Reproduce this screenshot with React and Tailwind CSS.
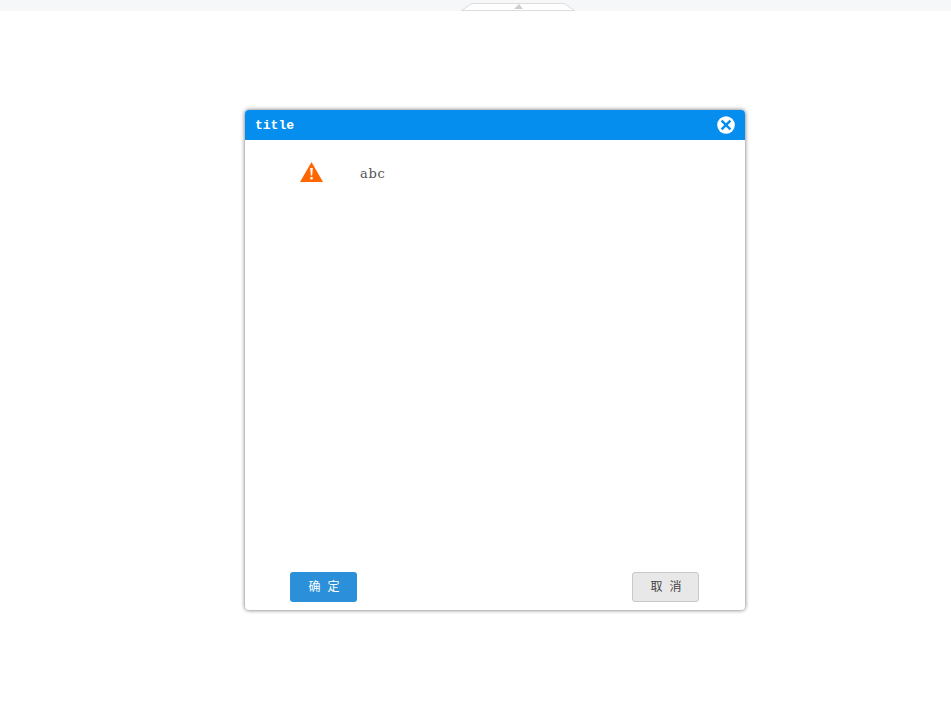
import React from 'react';

const font = { fontFamily: '"Liberation Mono", "Noto Sans CJK SC", monospace' };

export default function App() {
  return (
    <div className="min-h-screen bg-white flex flex-col items-center" style={font}>
      <div className="w-full h-[11px] bg-[#f6f7f9] flex justify-center">
        <div className="ml-[85px] mt-[3px] h-[8px]">
          <svg className="block" width="114" height="8" viewBox="0 0 114 8">
            <path d="M0.5 7.5 L11 0.5 H103 L113.5 7.5 Z" fill="#fff" stroke="#dcdcdc" />
            <path d="M53 6 L58 1 L62 6 Z" fill="#cfcfcf" />
          </svg>
        </div>
      </div>
      <div className="ml-[39px] mt-[99px] w-[500px] h-[500px] flex flex-col bg-white rounded-[4px] shadow-[0_0_4px_rgba(0,0,0,0.6)] overflow-hidden">
        <div className="h-[30px] bg-[#058eee] flex items-center justify-between pl-[10px] pr-[10px]">
          <span className="text-white text-[13px] font-bold pt-[2px]">title</span>
          <svg width="18" height="18" viewBox="0 0 18 18">
            <circle cx="9" cy="9" r="8.8" fill="#fff" />
            <path d="M4.6 4.6 L13.4 13.4 M13.4 4.6 L4.6 13.4" stroke="#058eee" strokeWidth="2.4" />
          </svg>
        </div>
        <div className="flex-1 flex items-start pl-[55px] pt-[22px]">
          <svg width="23" height="20" viewBox="0 0 23 20">
            <path d="M11.5 0 L23 20 H0 Z" fill="#ff6600" />
            <path d="M10.2 6 H12.8 L12.2 13.5 H10.8 Z M10.4 15 H12.6 V17.4 H10.4 Z" fill="#fff" />
          </svg>
          <span className="ml-[37px] text-[13px] leading-[24px] text-[#555] [font-family:'DejaVu_Serif',serif] tracking-[0.7px]">abc</span>
        </div>
        <div className="flex justify-between pl-[45px] pr-[46px] pb-[8px]">
          <button className="w-[67px] h-[30px] pt-[2px] pl-[1px] bg-[#2b90d9] rounded-[3px] text-white text-[12px] leading-[28px]">确 定</button>
          <button className="w-[67px] h-[30px] pt-[2px] pl-[1px] bg-[#e8e8e8] border border-[#c8c8c8] rounded-[3px] text-[#444] text-[12px] leading-[26px]">取 消</button>
        </div>
      </div>
    </div>
  );
}
